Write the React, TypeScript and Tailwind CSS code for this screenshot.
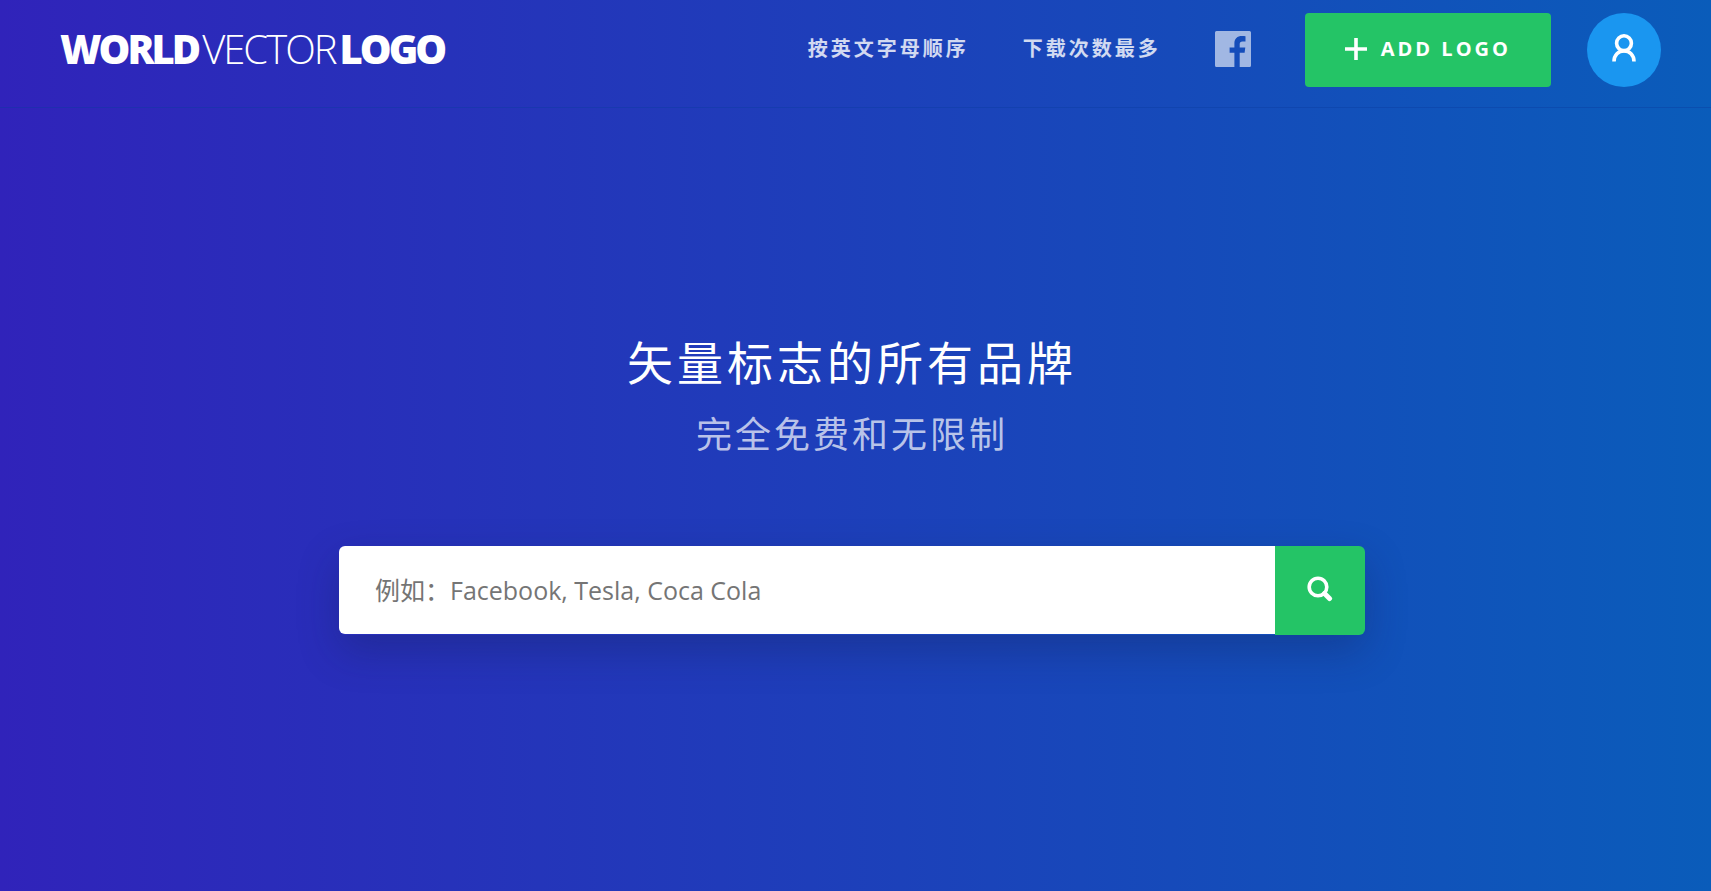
interface NavItem {
  label: string;
  href: string;
}

const navItems: NavItem[] = [
  { label: "按英文字母顺序", href: "#alphabetical" },
  { label: "下载次数最多", href: "#most-downloaded" },
];

const Logo = () => (
  <a
    href="#home"
    aria-label="Worldvectorlogo"
    className="flex shrink-0 gap-1 pb-0.5 text-[40px] leading-[54px] font-extrabold tracking-[-3px] whitespace-nowrap"
  >
    <span>WORLD</span>
    <span className="font-light tracking-[-2px]">VECTOR</span>
    <span>LOGO</span>
  </a>
);

const FacebookIcon = () => (
  <svg viewBox="0 0 36 36" className="size-9" fill="currentColor" aria-hidden="true">
    <path d="M1.500 0h33A1.500 1.500 0 0 1 36 1.500v33a1.500 1.500 0 0 1-1.500 1.500H24.700V21.800h4.900l.7-5.300h-5.600v-3.200c0-1.900.8-2.800 2.800-2.800h3V5.300c-.8-.2-2-.3-3.600-.3-4.600 0-7.500 2.600-7.500 7.400v4.100h-4.800v5.300h4.800V36H1.500A1.500 1.500 0 0 1 0 34.500v-33A1.500 1.500 0 0 1 1.500 0z" />
  </svg>
);

const PlusIcon = () => (
  <svg viewBox="0 0 22 22" className="size-[22px]" stroke="currentColor" strokeWidth="3.600" aria-hidden="true">
    <path d="M11 0v22M0 11h22" />
  </svg>
);

const UserIcon = () => (
  <svg viewBox="0 0 24 28" className="mb-1 h-7 w-6" fill="none" stroke="currentColor" strokeWidth="3.600" aria-hidden="true">
    <circle cx="12" cy="9.200" r="7.400" />
    <path d="M2 27.600C2 21 6.500 16.900 12 16.900s10 4.100 10 10.700" />
  </svg>
);

const SearchIcon = () => (
  <svg viewBox="0 0 26 26" className="mb-1 size-[26px]" fill="none" stroke="currentColor" aria-hidden="true">
    <circle cx="11" cy="11" r="8.800" strokeWidth="3.600" />
    <path d="M17.500 17.500l5 5" strokeWidth="5" strokeLinecap="round" />
  </svg>
);

function Header() {
  return (
    <header className="flex items-center justify-between border-b border-[#0a3ca0]/40 pt-[13px] pr-[50px] pb-5 pl-[60px]">
      <Logo />
      <div className="flex items-center">
        <nav className="flex items-center gap-[54px] pb-0.5 text-[20px] font-bold tracking-[3px] text-white/80">
          {navItems.map((item) => (
            <a key={item.href} href={item.href} className="whitespace-nowrap">
              {item.label}
            </a>
          ))}
          <a href="#facebook" aria-label="Facebook" className="text-white/60">
            <FacebookIcon />
          </a>
        </nav>
        <button
          type="button"
          className="ml-[54px] flex h-[74px] items-center gap-3.5 rounded bg-[#24c466] px-10 pb-0.5 text-[20px] font-bold tracking-[3px] whitespace-nowrap"
        >
          <PlusIcon />
          ADD LOGO
        </button>
        <button
          type="button"
          aria-label="Account"
          className="ml-9 flex size-[74px] shrink-0 items-center justify-center rounded-full bg-[#1a96f0]"
        >
          <UserIcon />
        </button>
      </div>
    </header>
  );
}

function App() {
  return (
    <div className="min-h-screen bg-linear-to-r/srgb from-[#3023ba] to-[#0a5cba] font-['Open_Sans','Noto_Sans_CJK_SC',sans-serif] text-white">
      <Header />
      <main className="flex flex-col items-center pt-[220px] pr-[7px]">
        <h1 className="text-[46px] leading-[68px] tracking-[4px]">矢量标志的所有品牌</h1>
        <p className="mt-[3px] text-[36px] leading-[72px] tracking-[3px] text-white/70">完全免费和无限制</p>
        <form
          role="search"
          onSubmit={(e) => e.preventDefault()}
          className="mt-[75px] flex h-[89px] w-[1026px] max-w-full rounded-md shadow-[0_16px_40px_rgba(20,30,80,0.3)]"
        >
          <input
            type="search"
            aria-label="搜索标志"
            placeholder="例如：Facebook, Tesla, Coca Cola"
            className="mb-px min-w-0 flex-1 rounded-l-md bg-white px-9 pt-0.5 text-[25px] text-gray-800 outline-none placeholder:text-[#757575]"
          />
          <button
            type="submit"
            aria-label="搜索"
            className="flex w-[90px] items-center justify-center rounded-r-md bg-[#24c466]"
          >
            <SearchIcon />
          </button>
        </form>
      </main>
    </div>
  );
}

export default App;
